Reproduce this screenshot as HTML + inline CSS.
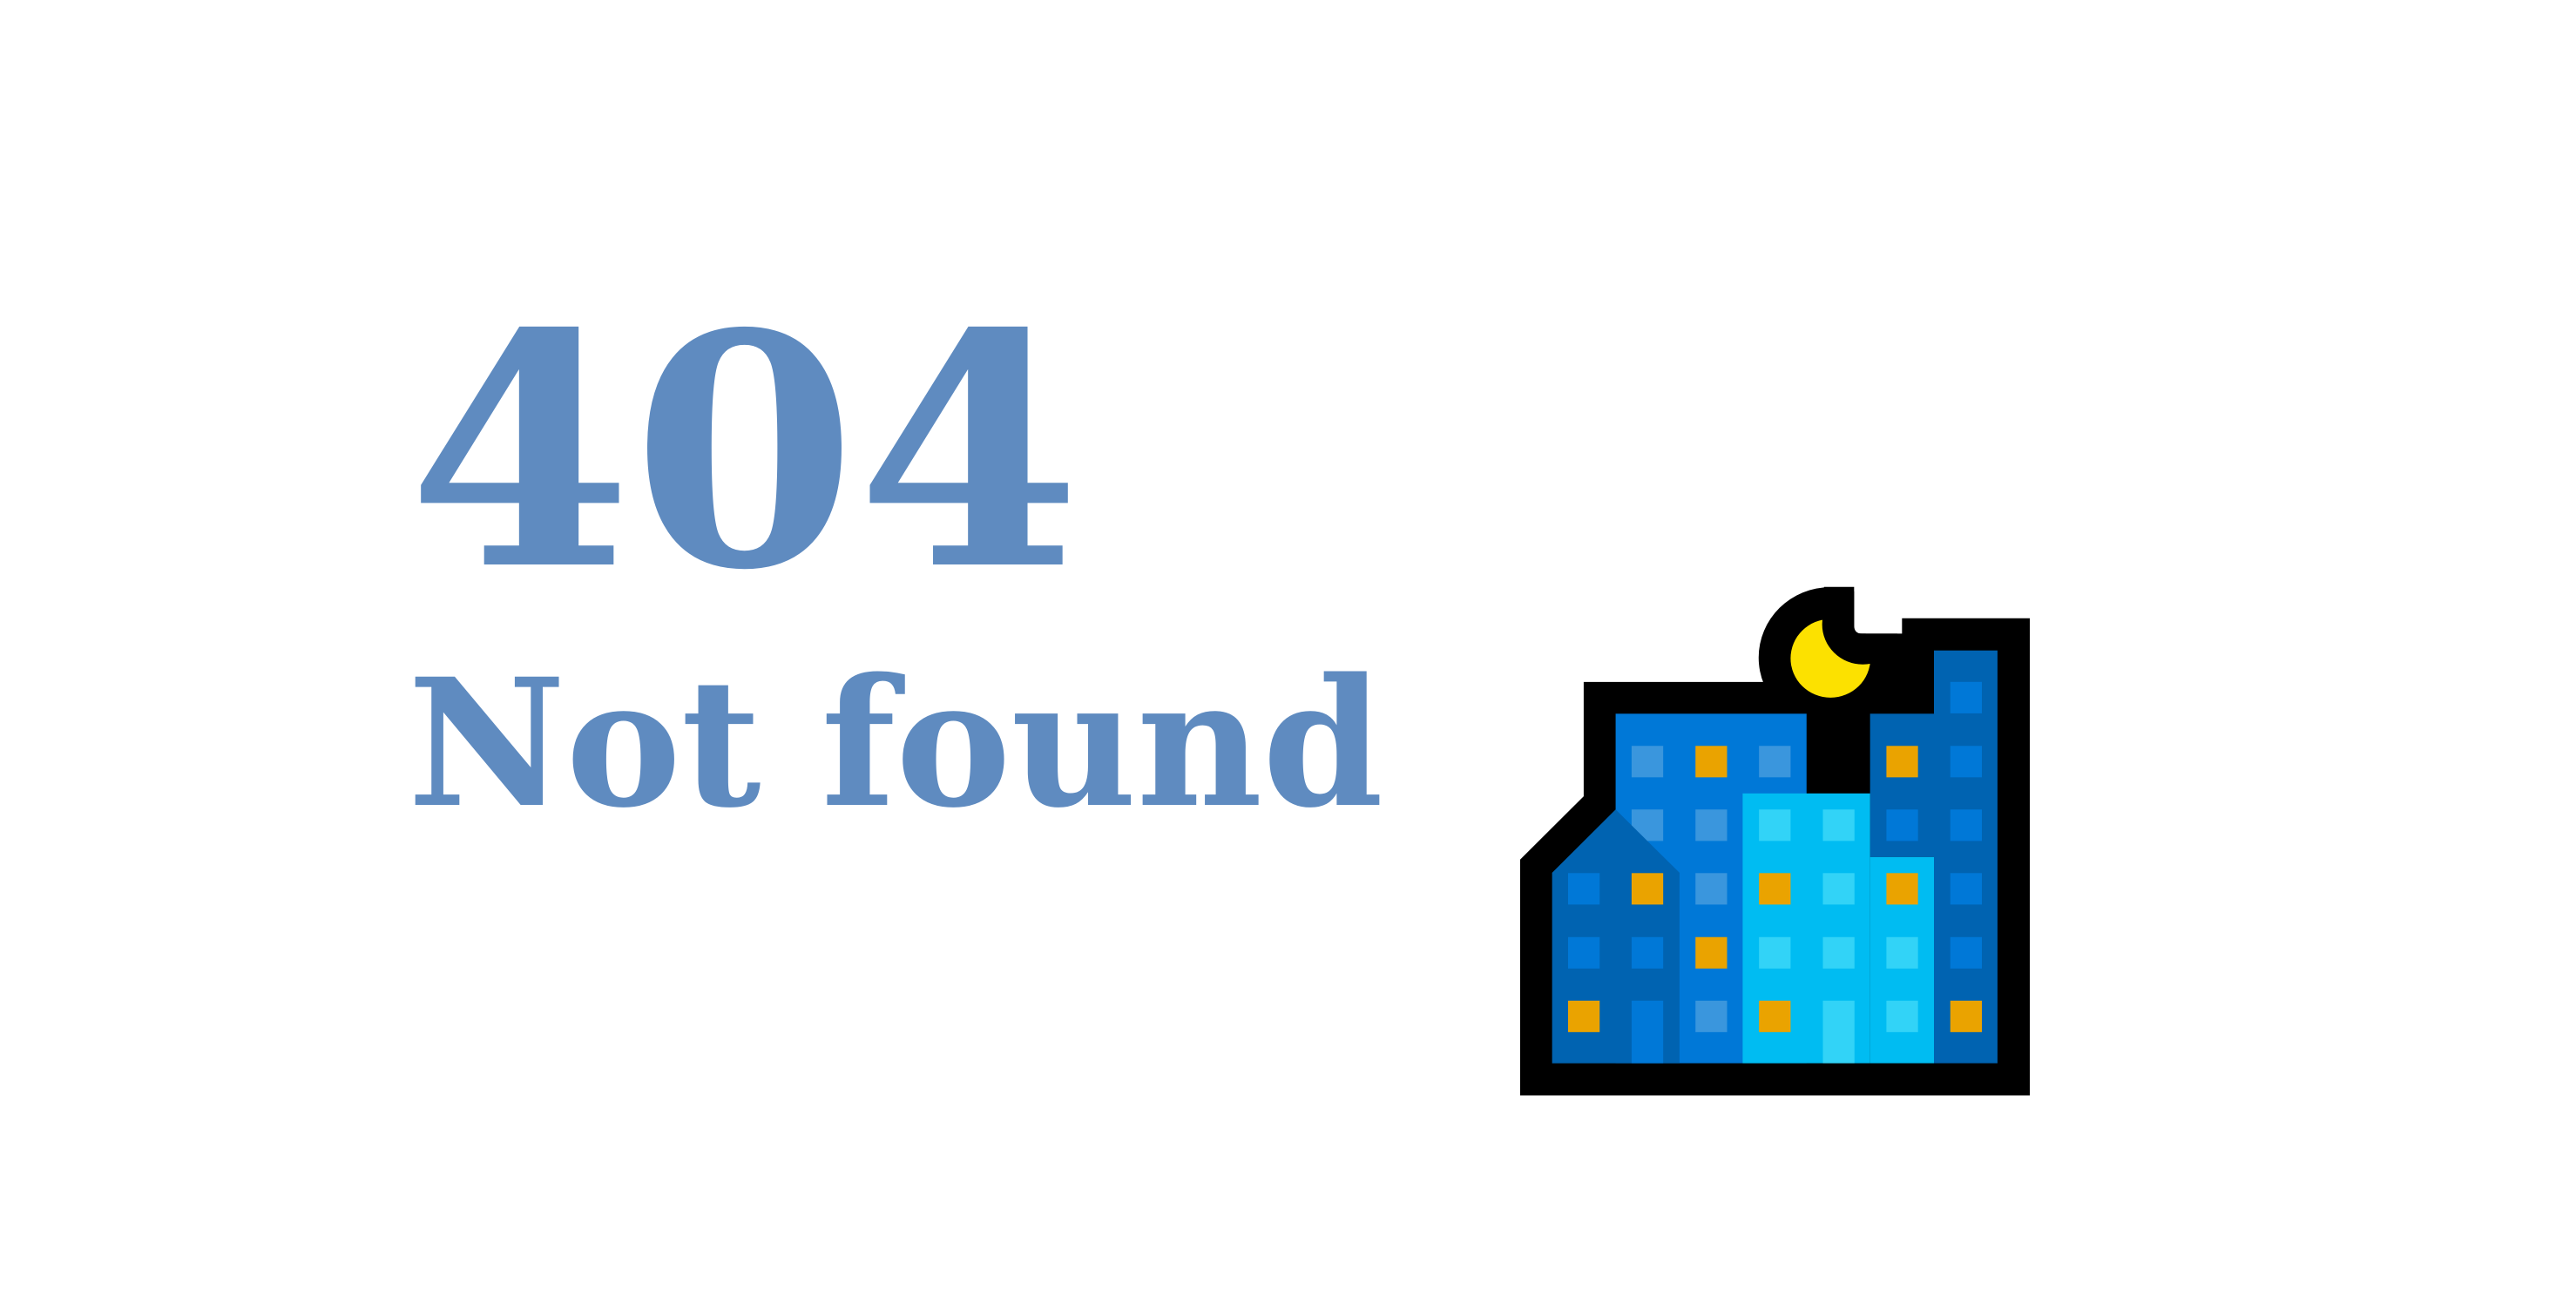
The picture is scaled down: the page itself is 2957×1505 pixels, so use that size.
<!DOCTYPE html>
<html><head><meta charset="utf-8"><style>
html,body{margin:0;padding:0;background:#fff;width:2957px;height:1505px;overflow:hidden}
svg{position:absolute;left:0;top:0}
</style></head><body>
<svg width="2957" height="1505" viewBox="0 0 2957 1505">
<text x="468" y="648" font-family="DejaVu Serif, serif" font-weight="bold" font-size="368" fill="#5f8bc0" textLength="773" lengthAdjust="spacingAndGlyphs">404</text>
<text x="468" y="924" font-family="DejaVu Serif, serif" font-weight="bold" font-size="202" fill="#5f8bc0" textLength="1120" lengthAdjust="spacingAndGlyphs">Not found</text>
</svg>
<svg style="left:1700px;top:638px" width="650" height="640" viewBox="0 0 1560 1560" preserveAspectRatio="none">
<defs>
<mask id="m"><rect x="0" y="0" width="1560" height="1560" fill="#fff"/><circle cx="1052" cy="192" r="112" fill="#000"/></mask>
<clipPath id="c"><polygon points="0,0 1028,0 1028,218 1560,218 1560,1560 0,1560"/></clipPath>
</defs>
<polygon fill="#000" points="108,850 283,673 283,353 800,353 800,218 1160,218 1160,175 1512,175 1512,1510 108,1510"/>
<circle cx="962" cy="285" r="197" fill="#000" clip-path="url(#c)"/>
<path fill="#000" d="M945,87 H1028 V195 Q1028,218 1050,218 H1060 V260 H945 Z"/>
<circle cx="963" cy="287" r="110" fill="#fce100" mask="url(#m)"/>
<rect x="1248" y="265" width="175" height="1155" fill="#0063b1"/>
<rect x="1072" y="442" width="176" height="401" fill="#0063b1"/>
<rect x="371" y="442" width="526" height="978" fill="#0078d7"/>
<rect x="721" y="665" width="351" height="755" fill="#00bcf2"/>
<rect x="1072" y="843" width="176" height="577" fill="#00bcf2"/>
<g>
<rect x="1293" y="353" width="87" height="88" fill="#0078d7"/>
<rect x="415" y="532" width="87" height="88" fill="#3a96dd"/>
<rect x="591" y="532" width="87" height="88" fill="#eaa300"/>
<rect x="766" y="532" width="87" height="88" fill="#3a96dd"/>
<rect x="1117" y="532" width="87" height="88" fill="#eaa300"/>
<rect x="1293" y="532" width="87" height="88" fill="#0078d7"/>
<rect x="415" y="710" width="87" height="88" fill="#3a96dd"/>
<rect x="591" y="710" width="87" height="88" fill="#3a96dd"/>
<rect x="766" y="710" width="87" height="88" fill="#32d3f7"/>
<rect x="942" y="710" width="87" height="88" fill="#32d3f7"/>
<rect x="1117" y="710" width="87" height="88" fill="#0078d7"/>
<rect x="1293" y="710" width="87" height="88" fill="#0078d7"/>
</g>
<polygon fill="#0063b1" points="196,887 371,710 547,887 547,1420 196,1420"/>
<g>
<rect x="240" y="888" width="87" height="88" fill="#0078d7"/>
<rect x="415" y="888" width="87" height="88" fill="#eaa300"/>
<rect x="591" y="888" width="87" height="88" fill="#3a96dd"/>
<rect x="766" y="888" width="87" height="88" fill="#eaa300"/>
<rect x="942" y="888" width="87" height="88" fill="#32d3f7"/>
<rect x="1117" y="888" width="87" height="88" fill="#eaa300"/>
<rect x="1293" y="888" width="87" height="88" fill="#0078d7"/>
<rect x="240" y="1067" width="87" height="88" fill="#0078d7"/>
<rect x="415" y="1067" width="87" height="88" fill="#0078d7"/>
<rect x="591" y="1067" width="87" height="88" fill="#eaa300"/>
<rect x="766" y="1067" width="87" height="88" fill="#32d3f7"/>
<rect x="942" y="1067" width="87" height="88" fill="#32d3f7"/>
<rect x="1117" y="1067" width="87" height="88" fill="#32d3f7"/>
<rect x="1293" y="1067" width="87" height="88" fill="#0078d7"/>
<rect x="240" y="1245" width="87" height="88" fill="#eaa300"/>
<rect x="415" y="1245" width="87" height="175" fill="#0078d7"/>
<rect x="591" y="1245" width="87" height="88" fill="#3a96dd"/>
<rect x="766" y="1245" width="87" height="88" fill="#eaa300"/>
<rect x="942" y="1245" width="87" height="175" fill="#32d3f7"/>
<rect x="1117" y="1245" width="87" height="88" fill="#32d3f7"/>
<rect x="1293" y="1245" width="87" height="88" fill="#eaa300"/>
</g>
</svg>
</body></html>
